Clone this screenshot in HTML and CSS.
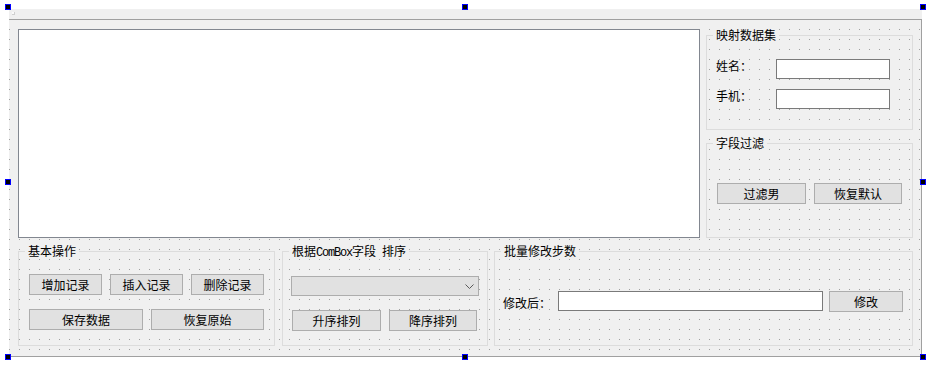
FILE: index.html
```html
<!DOCTYPE html>
<html lang="zh-CN">
<head>
<meta charset="utf-8">
<title>Form</title>
<link rel="stylesheet" href="styles.css">
</head>
<body>
<div class="designer">
  <div class="form">
    <div class="menubar"><span class="menu-mark"></span></div>
    <div class="central">
      <div class="top-row">
        <div class="table"></div>
        <div class="right-col">
          <div class="group">
            <div class="frame">
              <div class="title">映射数据集</div>
              <div class="body map-body">
                <div class="field-row"><span class="label">姓名：</span><span class="input map-input"></span></div>
                <div class="field-row second"><span class="label">手机：</span><span class="input map-input"></span></div>
              </div>
            </div>
          </div>
          <div class="group">
            <div class="frame">
              <div class="title">字段过滤</div>
              <div class="body filter-body">
                <span class="btn w89">过滤男</span>
                <span class="btn w88">恢复默认</span>
              </div>
            </div>
          </div>
        </div>
      </div>
      <div class="bottom-row">
        <div class="group g-basic">
          <div class="frame">
            <div class="title">基本操作</div>
            <div class="body basic-body">
              <div class="btn-row">
                <span class="btn w73">增加记录</span>
                <span class="btn w73">插入记录</span>
                <span class="btn w73">删除记录</span>
              </div>
              <div class="btn-row row2">
                <span class="btn w114">保存数据</span>
                <span class="btn w113">恢复原始</span>
              </div>
            </div>
          </div>
        </div>
        <div class="group g-sort">
          <div class="frame">
            <div class="title">根据<span class="mono">ComBox</span>字段<span class="mono"> </span>排序</div>
            <div class="body sort-body">
              <div class="combo">
                <svg class="chevron" width="9" height="5" viewBox="0 0 9 5"><polyline points="0.5,0.5 4.5,4.5 8.5,0.5" fill="none" stroke="#5a5a5a" stroke-width="1"/></svg>
              </div>
              <div class="btn-row sort-btns">
                <span class="btn w89">升序排列</span>
                <span class="btn w88">降序排列</span>
              </div>
            </div>
          </div>
        </div>
        <div class="group g-batch">
          <div class="frame">
            <div class="title">批量修改步数</div>
            <div class="body batch-body">
              <span class="label batch-label">修改后：</span>
              <span class="input batch-input"></span>
              <span class="btn w74 batch-btn">修改</span>
            </div>
          </div>
        </div>
      </div>
    </div>
  </div>
  <span class="handle h-tl"></span>
  <span class="handle h-tm"></span>
  <span class="handle h-tr"></span>
  <span class="handle h-ml"></span>
  <span class="handle h-mr"></span>
  <span class="handle h-bl"></span>
  <span class="handle h-bm"></span>
  <span class="handle h-br"></span>
</div>
</body>
</html>
```

FILE: styles.css
```css
* { box-sizing: border-box; }
html, body { margin: 0; padding: 0; background: #ffffff; }
body {
  font-family: "Noto Sans CJK SC", "Noto Sans", sans-serif;
  font-size: 12px;
  color: #000;
}
.designer {
  position: relative;
  width: 932px;
  height: 370px;
  padding: 9px 0 0 9px;
}
.form {
  width: 913px;
  height: 348px;
  background: #f0f0f0;
}
.menubar {
  height: 10px;
  padding: 3px 0 0 3px;
}
.menu-mark {
  display: block;
  width: 3px;
  height: 3px;
  background: #fafafa;
  border-right: 1px solid #d0d0d0;
  border-bottom: 1px solid #d0d0d0;
}
.central {
  height: 338px;
  border-right: 1px solid #a0a0a0;
  border-bottom: 1px solid #a0a0a0;
  background-color: #f0f0f0;
  background-image:
    conic-gradient(at 1px 1px, transparent 75%, #a0a0a0 0),
    linear-gradient(#a0a0a0, #a0a0a0);
  background-size: 10px 10px, 100% 1px;
  background-repeat: repeat, no-repeat;
  background-position: 0 0, 0 0;
  background-origin: border-box;
  padding: 10px 8px 0 9px;
}
.top-row {
  display: flex;
  gap: 6px;
  height: 209px;
}
.table {
  width: 682px;
  height: 209px;
  border: 1px solid #828790;
  background: #fff;
}
.right-col {
  width: 207px;
  display: flex;
  flex-direction: column;
  gap: 7px;
}
.group {
  height: 101px;
  padding-top: 6px;
}
.frame {
  height: 95px;
  border: 1px solid #dcdcdc;
}
.title {
  display: table;
  height: 12px;
  line-height: 12px;
  margin: -7px 0 0 6px;
  padding: 0 3px;
  background: #f0f0f0;
  white-space: pre;
}
.mono {
  font-family: "Liberation Mono", monospace;
  font-size: 12px;
  letter-spacing: -1.2px;
}
.label {
  display: block;
  line-height: 13px;
  white-space: nowrap;
}
.input {
  display: block;
  height: 20px;
  background: #fff;
  border: 1px solid #7a7a7a;
}
.btn {
  display: flex;
  align-items: center;
  justify-content: center;
  height: 21px;
  background: #e1e1e1;
  border: 1px solid #adadad;
  line-height: 12px;
  white-space: nowrap;
}
.w73 { width: 73px; }
.w74 { width: 74px; }
.w88 { width: 88px; }
.w89 { width: 89px; }
.w113 { width: 113px; }
.w114 { width: 114px; }

.map-body {
  margin-top: 18px;
  padding-left: 9px;
}
.field-row {
  display: flex;
  height: 20px;
}
.field-row.second { margin-top: 10px; }
.field-row .label { width: 60px; }
.map-input { width: 114px; }

.filter-body {
  display: flex;
  gap: 8px;
  margin-top: 34px;
  padding-left: 10px;
}

.bottom-row {
  display: flex;
  margin-top: 7px;
  height: 101px;
}
.g-basic { width: 257px; }
.g-sort { width: 206px; margin-left: 7px; }
.g-batch { width: 419px; margin-left: 6px; }

.btn-row {
  display: flex;
  gap: 8px;
}
.basic-body {
  margin-top: 17px;
  padding-left: 10px;
}
.row2 { margin-top: 14px; }

.sort-body {
  margin-top: 17px;
  padding-left: 8px;
}
.combo {
  width: 188px;
  height: 20px;
  background: #e1e1e1;
  border: 1px solid #adadad;
  display: flex;
  align-items: center;
  justify-content: flex-end;
  padding-right: 4px;
}
.chevron { display: block; margin-top: 1px; }
.sort-btns {
  margin-top: 14px;
  padding-left: 1px;
}

.batch-body {
  display: flex;
  align-items: flex-start;
  margin-top: 34px;
  padding-left: 8px;
}
.batch-label {
  width: 55px;
  line-height: 12px;
  margin-top: 6px;
}
.batch-input { width: 265px; }
.batch-btn { margin-left: 6px; }

.handle {
  position: absolute;
  width: 6px;
  height: 6px;
  background: #000;
  border: 1px solid #0000ff;
}
.h-tl { left: 5px; top: 4px; }
.h-tm { left: 462px; top: 4px; }
.h-tr { left: 920px; top: 4px; }
.h-ml { left: 5px; top: 179px; }
.h-mr { left: 920px; top: 179px; }
.h-bl { left: 5px; top: 354px; }
.h-bm { left: 462px; top: 354px; }
.h-br { left: 920px; top: 354px; }
```
